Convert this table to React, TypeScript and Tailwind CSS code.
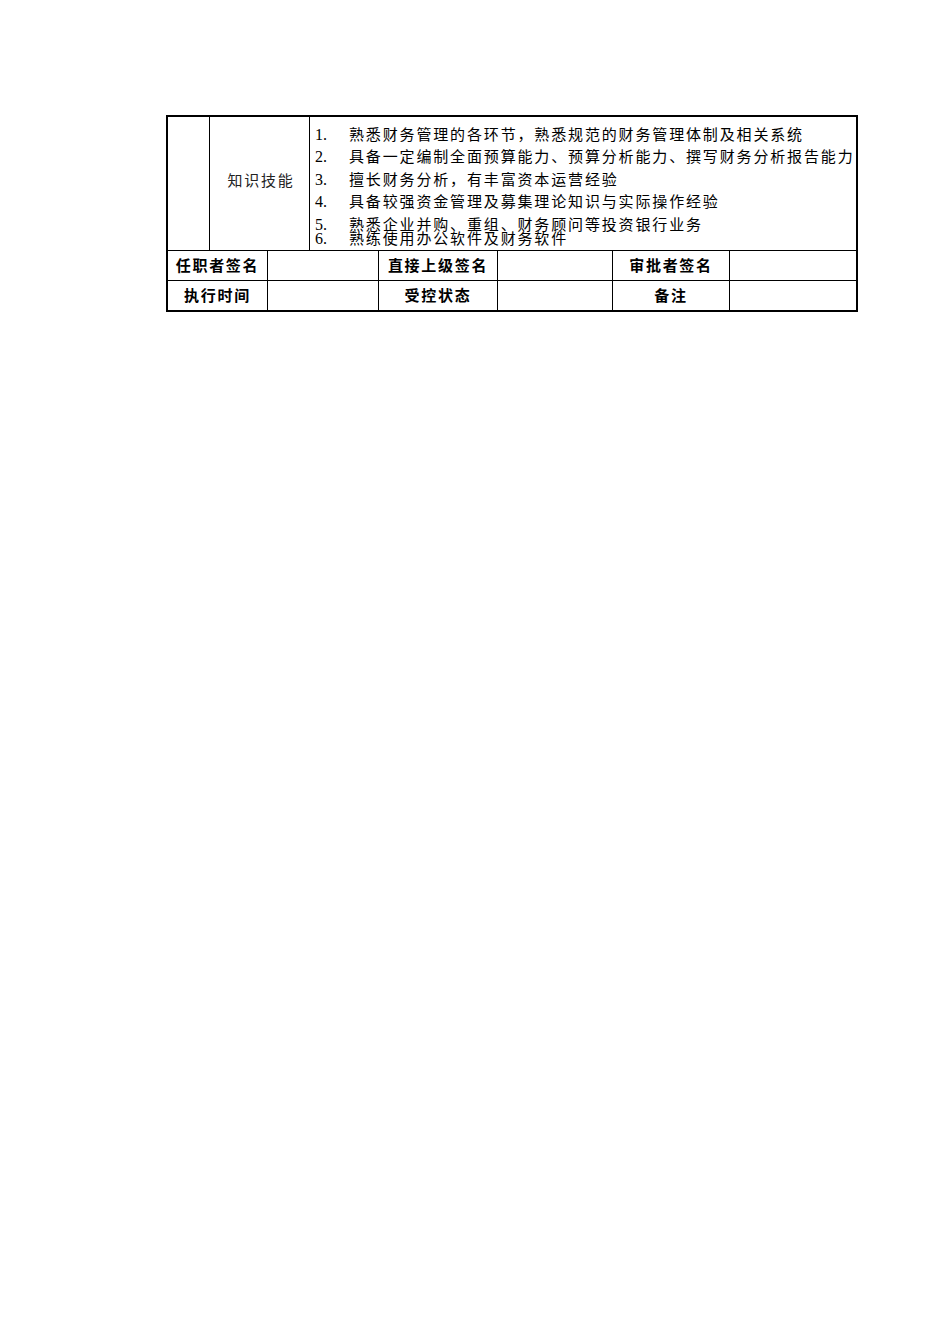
const items = [
  '熟悉财务管理的各环节，熟悉规范的财务管理体制及相关系统',
  '具备一定编制全面预算能力、预算分析能力、撰写财务分析报告能力',
  '擅长财务分析，有丰富资本运营经验',
  '具备较强资金管理及募集理论知识与实际操作经验',
  '熟悉企业并购、重组、财务顾问等投资银行业务',
  '熟练使用办公软件及财务软件',
];

const serif = 'font-["Liberation_Serif","Noto_Sans_CJK_SC",serif]';
const label = 'font-["Noto_Sans_CJK_SC",sans-serif] font-bold';

const App = () => {
  return (
    <div className="w-[950px] h-[1344px] bg-white text-black">
      <div className="pt-[115px] pl-[166px]">
        <div className="w-[692px] border-2 border-black">
          {/* Skills row */}
          <div className="flex h-[134px] border-b border-black">
            <div className="w-[42px] border-r border-black" />
            <div className="w-[100px] border-r border-black flex items-center justify-center pl-[3px] pb-[6px]">
              <span className='font-["Noto_Sans_CJK_SC",sans-serif] text-[15px] tracking-[1.8px] text-[#222]'>知识技能</span>
            </div>
            <div className={`flex-1 pl-[5px] pt-[7px] text-[15px] leading-[22.4px] ${serif}`}>
              {items.map((t, i) => (
                <div key={i} className={`flex ${i === 5 ? '-mt-[8.5px]' : ''}`}>
                  <span className="w-[34px] shrink-0 text-[16px]">{i + 1}.</span>
                  <span className="tracking-[1.85px] whitespace-nowrap">{t}</span>
                </div>
              ))}
            </div>
          </div>
          {/* Signature rows */}
          <div className={`flex h-[30px] border-b border-black text-[15px] tracking-[1.7px] ${label}`}>
            <div className="w-[100px] border-r border-black flex items-center justify-center">任职者签名</div>
            <div className="w-[111px] border-r border-black" />
            <div className="w-[119px] border-r border-black flex items-center justify-center">直接上级签名</div>
            <div className="w-[115px] border-r border-black" />
            <div className="w-[117px] border-r border-black flex items-center justify-center">审批者签名</div>
            <div className="flex-1" />
          </div>
          <div className={`flex h-[29px] text-[15px] tracking-[1.7px] ${label}`}>
            <div className="w-[100px] border-r border-black flex items-center justify-center">执行时间</div>
            <div className="w-[111px] border-r border-black" />
            <div className="w-[119px] border-r border-black flex items-center justify-center">受控状态</div>
            <div className="w-[115px] border-r border-black" />
            <div className="w-[117px] border-r border-black flex items-center justify-center">备注</div>
            <div className="flex-1" />
          </div>
        </div>
      </div>
    </div>
  );
};

export default App;
